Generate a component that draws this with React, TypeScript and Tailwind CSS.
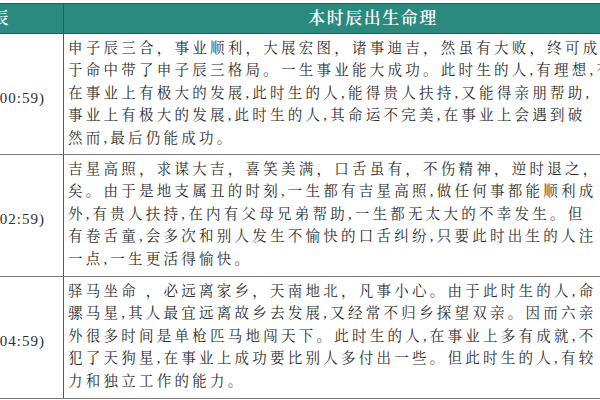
import React from "react";

const rows: { time: string; h: string; lines: string[] }[] = [
  {
    time: "(23:00-00:59)",
    h: "h-[121px]",
    lines: [
      "申子辰三合，事业顺利，大展宏图，诸事迪吉，然虽有大败，终可成功。由",
      "于命中带了申子辰三格局。一生事业能大成功。此时生的人,有理想,有",
      "在事业上有极大的发展,此时生的人,能得贵人扶持,又能得亲朋帮助,",
      "事业上有极大的发展,此时生的人,其命运不完美,在事业上会遇到破",
      "然而,最后仍能成功。",
    ],
  },
  {
    time: "(01:00-02:59)",
    h: "h-[122px]",
    lines: [
      "吉星高照，求谋大吉，喜笑美满，口舌虽有，不伤精神，逆时退之，",
      "矣。由于是地支属丑的时刻,一生都有吉星高照,做任何事都能顺利成",
      "外,有贵人扶持,在内有父母兄弟帮助,一生都无太大的不幸发生。但",
      "有卷舌童,会多次和别人发生不愉快的口舌纠纷,只要此时出生的人注",
      "一点,一生更活得愉快。",
    ],
  },
  {
    time: "(03:00-04:59)",
    h: "h-[122px]",
    lines: [
      "驿马坐命 ，必远离家乡，天南地北，凡事小心。由于此时生的人,命",
      "骡马星,其人最宜远离故乡去发展,又经常不归乡探望双亲。因而六亲",
      "外很多时间是单枪匹马地闯天下。此时生的人,在事业上多有成就,不",
      "犯了天狗星,在事业上成功要比别人多付出一些。但此时生的人,有较",
      "力和独立工作的能力。",
    ],
  },
];

export default function App() {
  return (
    <div className="w-[600px] h-[400px] overflow-hidden bg-white font-['Liberation_Serif','Noto_Serif_CJK_SC','Noto_Sans_CJK_SC',serif]">
      <div className="w-[680px] pt-[3px]">
        <div className="flex h-[31px] bg-[#2b8a7f] border-t border-b border-[#1e645c] text-white">
          <div className="w-[64px] shrink-0 overflow-hidden border-r border-[#1e645c] flex items-center justify-end pr-[53px]">
            <span className="whitespace-nowrap text-[17px] font-semibold tracking-[1.5px]">时辰</span>
          </div>
          <div className="flex-1 flex items-center justify-center">
            <span className="whitespace-nowrap text-[17px] font-semibold tracking-[1.5px] pl-[2px]">
              本时辰出生命理
            </span>
          </div>
        </div>
        {rows.map((r, i) => (
          <div key={i} className={`flex ${r.h} border-b border-[#7a7a7a] text-[#2e2e2e]`}>
            <div className="w-[64px] shrink-0 overflow-hidden border-r border-[#555] flex items-center justify-end pr-[18px] pt-[8px]">
              <span className="whitespace-nowrap text-[15px] tracking-[1px]">{r.time}</span>
            </div>
            <div className="flex-1 overflow-hidden pl-[4px] pt-[3px]">
              {r.lines.map((l, j) => (
                <div key={j} className="whitespace-nowrap text-[14.5px] leading-[22.4px] tracking-[3.25px]">
                  {l}
                </div>
              ))}
            </div>
          </div>
        ))}
      </div>
    </div>
  );
}
